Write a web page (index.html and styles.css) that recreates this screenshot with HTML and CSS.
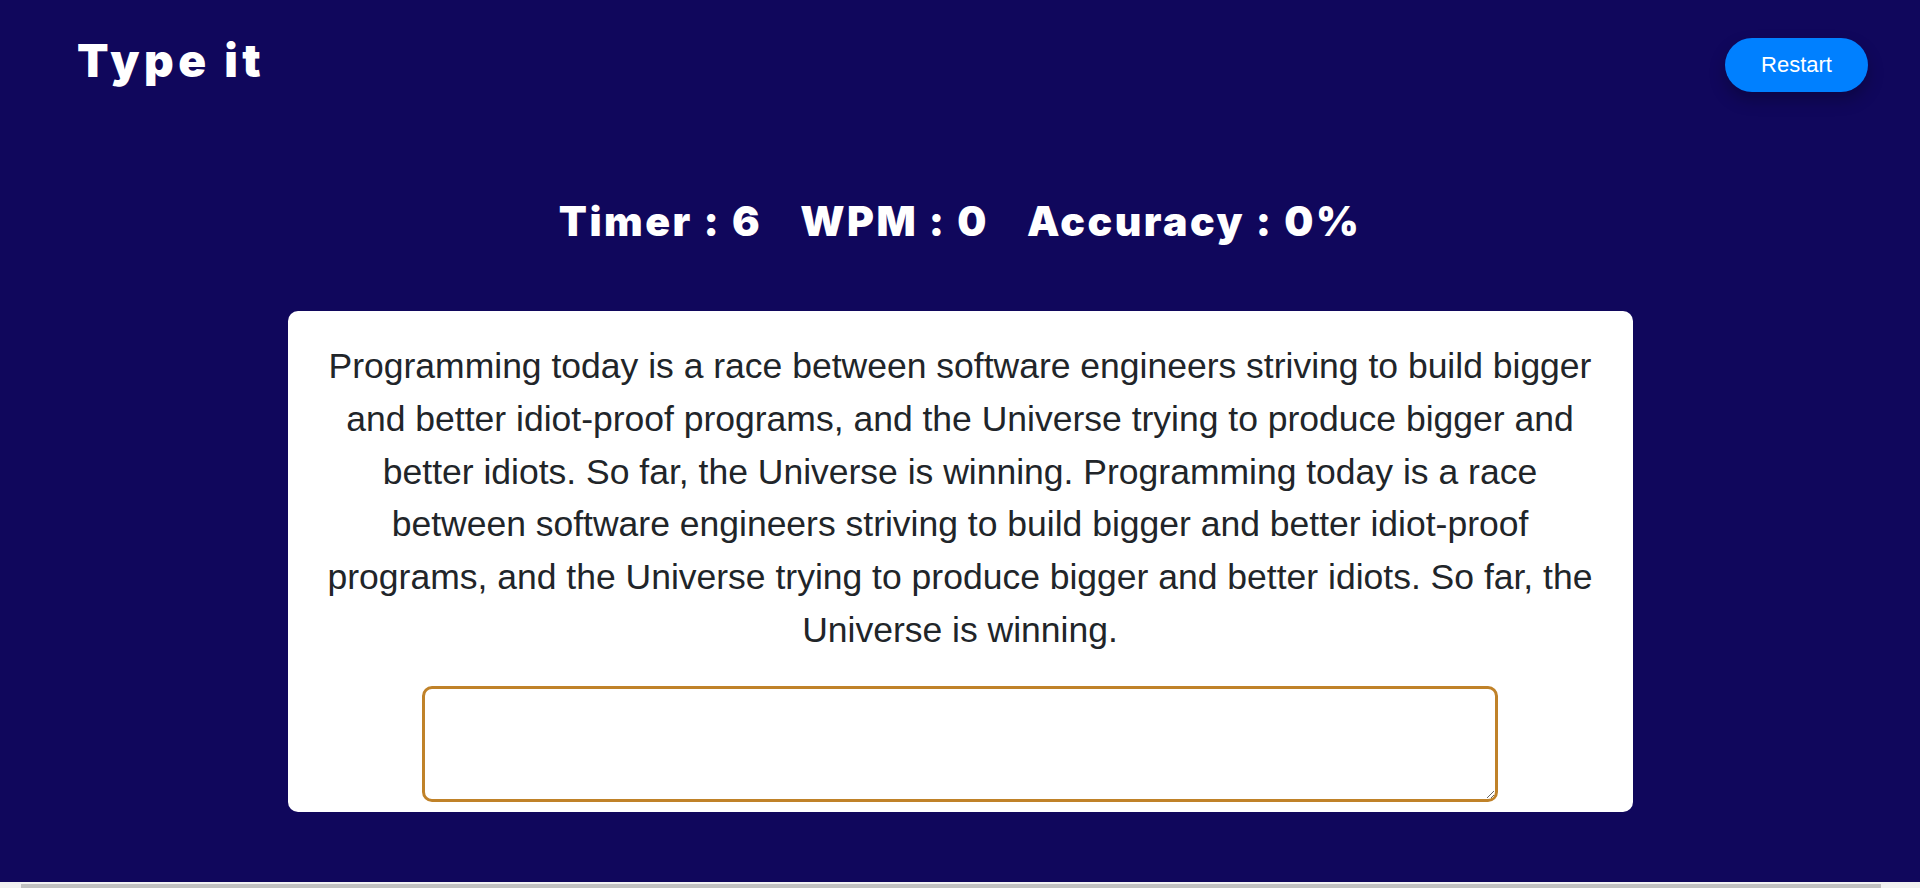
FILE: index.html
```html
<!DOCTYPE html>
<html lang="en">
<head>
<meta charset="utf-8">
<title>Type it</title>
<link rel="stylesheet" href="styles.css">
</head>
<body>
<div class="page">
  <header class="topbar">
    <h1 class="logo">Type it</h1>
    <button class="restart" type="button">Restart</button>
  </header>
  <h2 class="stats">
    <span class="stat">Timer : 6</span>
    <span class="stat">WPM : 0</span>
    <span class="stat">Accuracy : 0%</span>
  </h2>
  <section class="card">
    <p class="quote">Programming today is a race between software engineers striving to build bigger and better idiot-proof programs, and the Universe trying to produce bigger and better idiots. So far, the Universe is winning. Programming today is a race between software engineers striving to build bigger and better idiot-proof programs, and the Universe trying to produce bigger and better idiots. So far, the Universe is winning.</p>
    <textarea class="input"></textarea>
  </section>
</div>
<div class="hscroll"><div class="hscroll-thumb"></div></div>
</body>
</html>
```

FILE: styles.css
```css
html, body {
  margin: 0;
  padding: 0;
}

body {
  background: #10075c;
  height: 888px;
  display: flex;
  flex-direction: column;
  overflow: hidden;
  font-family: "Liberation Sans", Arial, sans-serif;
}

.page {
  flex: 1;
}

.topbar {
  display: flex;
  justify-content: space-between;
  align-items: flex-start;
  padding: 38px 52px 0 77px;
}

.logo {
  margin: 0;
  font-family: Inter, "Noto Sans", sans-serif;
  font-weight: 900;
  font-size: 46px;
  line-height: 45px;
  letter-spacing: 4.5px;
  color: #ffffff;
}

.restart {
  height: 54px;
  width: 143px;
  border: none;
  border-radius: 27px;
  background: #0080ff;
  color: #ffffff;
  font-family: "Liberation Sans", Arial, sans-serif;
  font-size: 22px;
  padding: 0;
  box-shadow: 0 8px 16px rgba(0, 0, 0, 0.25);
}

.stats {
  margin: 109px 0 0;
  display: flex;
  justify-content: center;
  gap: 38px;
  font-family: Inter, "Noto Sans", sans-serif;
  font-weight: 900;
  font-size: 41px;
  line-height: 41px;
  letter-spacing: 2.5px;
  color: #ffffff;
}

.card {
  width: 1345px;
  box-sizing: border-box;
  margin: 69px auto 0;
  background: #ffffff;
  border-radius: 10px;
  padding: 29px 0 10px;
}

.quote {
  margin: 0;
  padding: 0 30px;
  text-align: center;
  font-size: 35.5px;
  line-height: 52.8px;
  color: #212529;
}

.input {
  display: block;
  box-sizing: border-box;
  width: 1076px;
  height: 116px;
  margin: 29px auto 0;
  border: 3px solid #c08229;
  border-radius: 10px;
  background: #ffffff;
  outline: none;
  font-family: "Liberation Sans", Arial, sans-serif;
  font-size: 20px;
}

.hscroll {
  height: 6px;
  background: #f1f1f1;
  padding: 2px 39px 0 21px;
  box-sizing: border-box;
}

.hscroll-thumb {
  height: 4px;
  background: #c1c1c1;
}
```
